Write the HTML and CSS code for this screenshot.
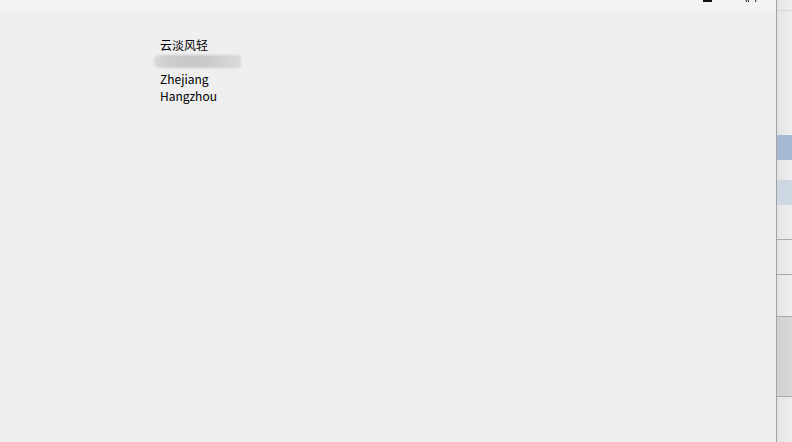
FILE: index.html
```html
<!DOCTYPE html>
<html lang="zh">
<head>
    <meta charset="UTF-8">
    <meta name="viewport" content="width=device-width, initial-scale=1.0">
    <title>Profile</title>
    <link rel="stylesheet" href="styles.css">
</head>
<body>

    <div class="desktop">
        <!-- main window -->
        <div class="window">
            <div class="titlebar">
                <span class="btn-min"></span>
                <span class="btn-close">
                    <svg width="14" height="3" viewBox="0 0 14 3">
                        <path d="M1 0 L1.6 2 M3 0 L3.6 2 M11 0 L10.4 2" stroke="#222" stroke-width="1" fill="none"/>
                    </svg>
                </span>
            </div>
            <div class="content">
                <div class="info">
                    <div class="line">云淡风轻</div>
                    <div class="line smudge-row"><span class="smudge"></span></div>
                    <div class="line">Zhejiang</div>
                    <div class="line">Hangzhou</div>
                </div>
            </div>
        </div>

        <!-- window behind, only a strip visible -->
        <div class="behind">
            <div class="row r-top"></div>
            <div class="row r-plain r1"></div>
            <div class="row r-sel"></div>
            <div class="row r-plain r2"></div>
            <div class="row r-hover"></div>
            <div class="row r-plain r3"></div>
            <div class="row r-line r4"></div>
            <div class="row r-line r5"></div>
            <div class="row r-dark"></div>
            <div class="row r-line r6"></div>
        </div>
    </div>

</body>
</html>
```

FILE: styles.css
```css
/* Page fills the 792x442 window */
body {
    margin: 0;
    padding: 0;
    overflow: hidden;
    font-family: "Noto Sans CJK SC", "Liberation Sans", sans-serif;
    font-size: 12px;
    color: #000;
    background-color: #f0f0f0;
}

.desktop {
    display: flex;
    width: 792px;
    height: 442px;
}

/* Main window */
.window {
    width: 776px;
    display: flex;
    flex-direction: column;
    background-color: #efefef;
    border-right: 1px solid #a3a3a3;
}

.titlebar {
    height: 12px;
    background-color: #f2f2f2;
    border-bottom: 1px solid #ececec;
    position: relative;
}

.btn-min {
    position: absolute;
    left: 703px;
    top: 0;
    width: 9px;
    height: 2px;
    background-color: #111;
}

.btn-close {
    position: absolute;
    left: 745px;
    top: 0;
    height: 3px;
    display: flex;
}

.content {
    flex: 1;
    padding: 23px 0 0 160px;
}

.info .line {
    height: 17px;
    line-height: 17px;
    white-space: nowrap;
}

/* Blurred-out line */
.smudge-row {
    position: relative;
}

.smudge {
    position: absolute;
    left: -7px;
    top: 2px;
    width: 88px;
    height: 13px;
    border-radius: 7px 3px 3px 7px;
    background: linear-gradient(90deg, #dcdcdc 0%, #cecece 15%, #c6c6c6 45%, #cdcdcd 70%, #d4d4d4 85%, #dadada 100%);
    filter: blur(1.2px);
}

/* Strip of the window behind */
.behind {
    flex: 1;
    display: flex;
    flex-direction: column;
    background: linear-gradient(90deg, #e3e3e3, #efefef);
}

.behind .row {
    flex: none;
}

.r-top {
    height: 10px;
    border-bottom: 1px dotted #c8c8c8;
}

.r1 { height: 124px; }

.r-sel {
    height: 25px;
    background: #a8b9d6;
}

.r2 { height: 20px; }

.r-hover {
    height: 25px;
    background: #cdd7e4;
}

.r3 {
    height: 34px;
    border-bottom: 1px solid #a9a9a9;
}

.r4 {
    height: 34px;
    border-bottom: 1px solid #a9a9a9;
}

.r5 {
    height: 41px;
    border-bottom: 1px solid #a9a9a9;
}

.r-dark {
    height: 79px;
    background: linear-gradient(90deg, #d0d0d0, #d8d8d8);
    border-bottom: 1px solid #a9a9a9;
}

.r6 {
    height: 46px;
}
```
